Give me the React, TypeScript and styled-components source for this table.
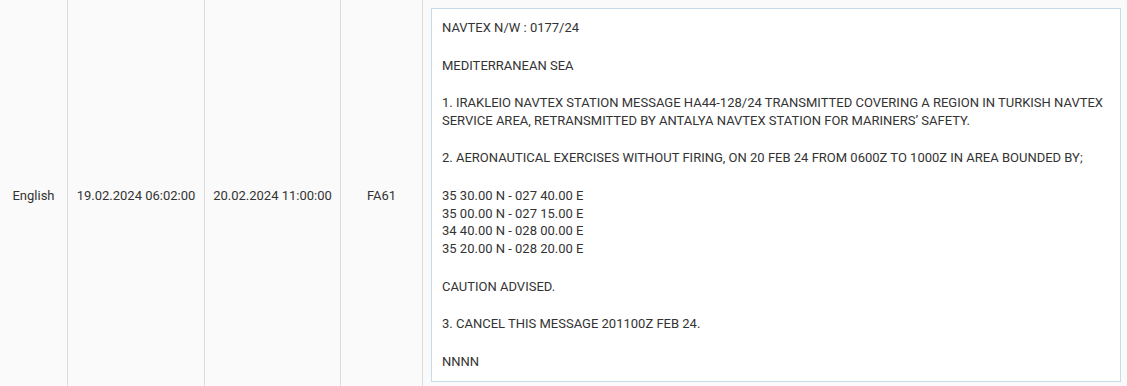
import React from "react";
import styled, { createGlobalStyle } from "styled-components";

const Global = createGlobalStyle`
  html, body { margin: 0; padding: 0; background: #fafafa; }
  body { font-family: Roboto, "Liberation Sans", Arial, sans-serif; color: #333; overflow: hidden; }
`;

const Row = styled.div`
  display: grid;
  grid-template-columns: 68px 137px 136px 82px 1fr;
  width: 1127px;
  background: #fafafa;
`;

const Cell = styled.div`
  display: flex;
  align-items: center;
  justify-content: center;
  font-size: 13px;
  color: #333;
  border-right: 1px solid #dcdcdc;
  white-space: nowrap;
`;

const MessageCell = styled.div`
  padding: 8px 6px 8px 8px;
`;

const MessageBox = styled.div`
  box-sizing: border-box;
  background: #fff;
  border: 1px solid #c8dce8;
  padding: 10px 10px 9px 10px;
  height: 374px;
  font-size: 13px;
  line-height: 17.7px;
  color: #333;
`;

const Para = styled.p`
  margin: 0 0 19.9px 0;
  &:last-child { margin-bottom: 0; }
`;

export default function App() {
  return (
    <>
      <Global />
      <Row>
        <Cell>English</Cell>
        <Cell>19.02.2024 06:02:00</Cell>
        <Cell>20.02.2024 11:00:00</Cell>
        <Cell>FA61</Cell>
        <MessageCell>
          <MessageBox>
            <Para>NAVTEX N/W : 0177/24</Para>
            <Para>MEDITERRANEAN SEA</Para>
            <Para>
              1. IRAKLEIO NAVTEX STATION MESSAGE HA44-128/24 TRANSMITTED COVERING A REGION IN TURKISH NAVTEX
              <br />
              SERVICE AREA, RETRANSMITTED BY ANTALYA NAVTEX STATION FOR MARINERS’ SAFETY.
            </Para>
            <Para>2. AERONAUTICAL EXERCISES WITHOUT FIRING, ON 20 FEB 24 FROM 0600Z TO 1000Z IN AREA BOUNDED BY;</Para>
            <Para>
              35 30.00 N - 027 40.00 E
              <br />
              35 00.00 N - 027 15.00 E
              <br />
              34 40.00 N - 028 00.00 E
              <br />
              35 20.00 N - 028 20.00 E
            </Para>
            <Para>CAUTION ADVISED.</Para>
            <Para>3. CANCEL THIS MESSAGE 201100Z FEB 24.</Para>
            <Para>NNNN</Para>
          </MessageBox>
        </MessageCell>
      </Row>
    </>
  );
}
